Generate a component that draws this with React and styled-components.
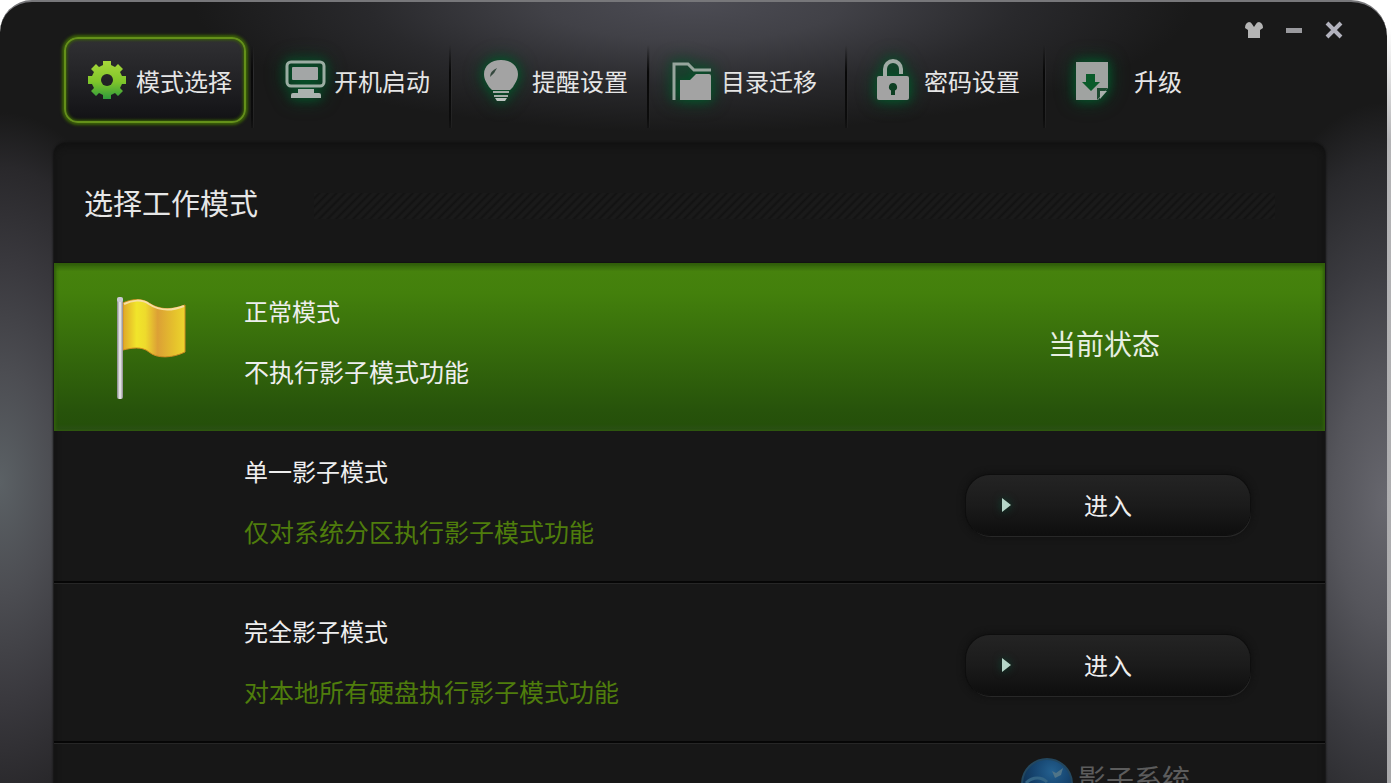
import React, { useState } from 'react';
import styled, { createGlobalStyle, css } from 'styled-components';

const GlobalStyle = createGlobalStyle`
  * {
    box-sizing: border-box;
  }

  body {
    margin: 0;
    overflow: hidden;
    background: #fff;
    font-family: 'Noto Sans CJK SC', 'Liberation Sans', sans-serif;
  }

  button {
    font-family: inherit;
    margin: 0;
    cursor: pointer;
  }
`;

const Desktop = styled.div`
  height: 100vh;
  overflow: hidden;
  padding-right: 4px;
  background: linear-gradient(to bottom, #fff 30px, #b4b4b6 140px, #a8a8aa);
`;

const Window = styled.div`
  display: flex;
  flex-direction: column;
  height: 100%;
  overflow: hidden;
  border-radius: 32px 36px 0 0;
  border-top: 2px solid #77777a;
  background:
    radial-gradient(ellipse 500px 130px at 50% 0, #4c4c54, #414147 30%, #29292c 65%, transparent),
    radial-gradient(ellipse 180px 370px at 0 480px, #5b6165, #4c4d52 30%, #39383d 60%, #29282b 85%, transparent),
    radial-gradient(ellipse 180px 400px at 100% 500px, #67676e, #55555b 30%, #3b3b40 60%, #29292c 85%, transparent),
    #191919;
`;

const Header = styled.header`
  display: flex;
  flex-shrink: 0;
  height: 141px;
  padding: 35px 33px 0 56px;
`;

const Tabs = styled.ul`
  display: flex;
  list-style: none;
  margin: 0;
  padding: 0;
`;

const TabItem = styled.li`
  flex: 0 0 198px;
  height: 91px;
  padding: 0 8px 5px;
  background:
    linear-gradient(transparent, #080808 30%, #0c0c0c 80%, transparent) right 1px top 8px / 2px 100% no-repeat,
    linear-gradient(transparent, #2c2c2e 30%, #232323 80%, transparent) right top 8px / 1px 100% no-repeat;

  &:last-child {
    flex: 0 0 auto;
    background: none;
  }
`;

const TabButton = styled.button`
  display: flex;
  align-items: center;
  gap: 9px;
  width: 100%;
  height: 100%;
  padding: 0 0 0 ${({ $indent }) => $indent}px;
  border: 2px solid transparent;
  border-radius: 14px;
  background: none;
  color: #e6e6e6;
  font-size: 24px;
  line-height: 32px;
  text-align: left;
  white-space: nowrap;

  ${({ $active }) =>
    $active &&
    css`
      border-color: #64901a;
      background: linear-gradient(#303033, #222225 50%, #121215) padding-box;
      box-shadow:
        0 0 3px 2px #3b6206,
        inset 0 0 3px 1px #3b6206;
    `}
`;

const TabLabel = styled.span`
  min-width: 72px;
  padding-top: 2px;
  text-align: center;
`;

const TabIcon = styled.svg`
  flex: none;
  width: 40px;
  height: 40px;
  overflow: visible;
  filter: ${({ $glow }) =>
    $glow ? 'drop-shadow(0 0 5px #06522a) drop-shadow(0 0 8px #064a26)' : 'none'};
`;

const Controls = styled.div`
  display: flex;
  height: 40px;
  margin: -27px 0 0 auto;
`;

const ControlButton = styled.button`
  display: flex;
  align-items: center;
  justify-content: center;
  width: 40px;
  height: 40px;
  padding: 0;
  border: 0;
  background: none;
`;

const Panel = styled.main`
  flex: 1 0 auto;
  margin: 0 62px 0 54px;
  border-radius: 12px 12px 0 0;
  background: #171717;
  box-shadow:
    0 0 2px 1px #121212,
    inset 0 3px 6px #111;
`;

const PanelHeader = styled.div`
  display: flex;
  align-items: center;
  gap: 56px;
  height: 120px;
  padding: 0 50px 2px 30px;
`;

const PanelTitle = styled.h1`
  margin: 0;
  color: #e6e6e6;
  font-size: 29px;
  font-weight: 400;
  line-height: 40px;
  white-space: nowrap;
`;

const Hatch = styled.div`
  flex: 1;
  height: 26px;
  margin-top: 8px;
  background: repeating-linear-gradient(135deg, #1a1a1a 0 2px, #121212 4px, #1a1a1a 6px);
`;

const ModeList = styled.ul`
  list-style: none;
  margin: 0;
  padding: 0;
`;

const ModeRow = styled.li`
  display: flex;
  align-items: center;
  height: 160px;
  padding: 0 75px 2px 0;
  border-bottom: 2px solid #060606;
  box-shadow: 0 1px 0 #262626;

  ${({ $current }) =>
    $current &&
    css`
      position: relative;
      height: 168px;
      margin-bottom: -8px;
      padding-bottom: 12px;
      border-bottom: 0;
      background: linear-gradient(#2f5b0b, #46820d 5%, #43800c 18%, #27530b 88%, #25500a 96%, #2c4f18);
      box-shadow:
        0 -1px 1px #121212,
        inset 2px 0 3px #315f0b,
        inset -2px 0 3px #315f0b;
    `}
`;

const ModeIcon = styled.div`
  display: flex;
  justify-content: center;
  flex: 0 0 190px;
  padding: 14px 0 0 8px;
`;

const ModeText = styled.div`
  flex: 1;
  white-space: nowrap;
`;

const ModeName = styled.h2`
  margin: 0;
  color: #eee;
  font-size: 24px;
  font-weight: 400;
  line-height: 60px;
`;

const ModeDescription = styled.p`
  margin: 0;
  color: ${({ $current }) => ($current ? '#eee' : '#4f7d0c')};
  font-size: 25px;
  line-height: 60px;
`;

const ModeAction = styled.div`
  flex: 0 0 284px;
  padding-top: 8px;
`;

const CurrentState = styled.p`
  margin: 0;
  padding: 0 8px 4px 0;
  color: #e8efe2;
  font-size: 28px;
  line-height: 60px;
  text-align: center;
`;

const EnterButton = styled.button`
  display: grid;
  grid-template-columns: 40px 1fr 40px;
  align-items: center;
  width: 100%;
  height: 60px;
  padding: 0 16px;
  border: 0;
  border-radius: 24px;
  background: linear-gradient(#242424, #1b1b1b 50%, #0e0e0e);
  box-shadow:
    0 0 0 1px #0e0e0e,
    1px 2px 0 0 #282828,
    0 0 6px 2px #101010;
  color: #eee;
  font-size: 24px;
  line-height: 32px;
`;

const Arrow = styled.svg`
  justify-self: center;
  margin-left: 8px;
  filter: drop-shadow(0 0 4px #0a4a34);
`;

const Brand = styled.footer`
  display: flex;
  align-items: flex-start;
  justify-content: flex-end;
  gap: 5px;
  padding: 15px 135px 0 0;
  color: #5c5c5c;
  font-size: 28px;
  line-height: 40px;
`;

const GearIcon = () => (
  <TabIcon viewBox="0 0 40 40" aria-hidden="true">
    <defs>
      <linearGradient id="gear" x1="0" y1="0" x2="0" y2="1">
        <stop offset="0" stopColor="#a8d83a" />
        <stop offset="0.55" stopColor="#7fc52a" />
        <stop offset="1" stopColor="#2f9a3c" />
      </linearGradient>
      <mask id="gearHole">
        <rect width="40" height="40" fill="#fff" />
        <circle cx="20" cy="20" r="6" fill="#000" />
      </mask>
    </defs>
    <path
      mask="url(#gearHole)"
      fill="url(#gear)"
      d="M16 1h8v4l4 2 3-3 5 5-3 3 2 4h4v8h-4l-2 4 3 3-5 5-3-3-4 2v4h-8v-4l-4-2-3 3-5-5 3-3-2-4H1v-8h4l2-4-3-3 5-5 3 3 4-2z"
    />
  </TabIcon>
);

const MonitorIcon = () => (
  <TabIcon $glow viewBox="0 0 40 40" aria-hidden="true">
    <rect x="2" y="2" width="37" height="24" rx="4" fill="none" stroke="#9bada3" strokeWidth="3" />
    <rect x="7" y="7" width="26" height="13" rx="1" fill="#a3a6a6" />
    <path d="M13 29h16v4h5q2 0 2 2v3H6v-3q0-2 2-2h5z" fill="#a9b2ae" />
  </TabIcon>
);

const BulbIcon = () => (
  <TabIcon $glow viewBox="0 0 40 40" aria-hidden="true">
    <path
      d="M18 0C8 0 1 6 1 14c0 6 3 9 5 13l3 3h18l3-3c2-4 5-7 5-13C35 6 28 0 18 0z"
      fill="#a3a3a3"
    />
    <path d="M7 17q0-6 7-9-2 5-7 9z" fill="#35483e" />
    <path d="M10 32h16M11 36h14" stroke="#a3aca7" strokeWidth="2" />
    <path d="M12 38h12l-2 3h-8z" fill="#bcc2bf" />
  </TabIcon>
);

const FolderIcon = () => (
  <TabIcon $glow viewBox="0 0 40 40" aria-hidden="true">
    <path d="M2 40V4h14l6 6h17" fill="none" stroke="#97a59d" strokeWidth="3" />
    <path d="M8 40V20h10l6-6h13q2 0 2 2v24z" fill="#a3a3a3" />
  </TabIcon>
);

const LockIcon = () => (
  <TabIcon $glow viewBox="0 0 40 40" aria-hidden="true">
    <path d="M10 16V9a8 8 0 0 1 16 0v5" fill="none" stroke="#a0aba5" strokeWidth="4" />
    <rect x="2" y="16" width="32" height="24" rx="2" fill="#a3a3a3" />
    <path d="M18 23a4 4 0 0 1 2 7.500V35h-4v-4.500A4 4 0 0 1 18 23z" fill="#0d3f22" />
  </TabIcon>
);

const UpgradeIcon = () => (
  <TabIcon $glow viewBox="0 0 40 40" aria-hidden="true">
    <path d="M3 2h32v26l-10 12H3z" fill="#a0a3a1" />
    <path d="M13 14h9v8h5l-9 9-9-9h4z" fill="#0a5a2a" />
    <path d="M24 40V28h11z" fill="#1d4a30" />
    <path d="M27 39v-8h7z" fill="#a9b0ac" />
  </TabIcon>
);

const ShirtIcon = () => (
  <svg width="18" height="18" viewBox="0 0 18 18" aria-hidden="true">
    <path
      d="M4 1q2 0 3 2l2 3 2-3q1-2 3-2 4 1 4 6l-3 2v8H3V9L0 7q0-5 4-6z"
      fill="#b4b4b4"
    />
  </svg>
);

const MinimizeIcon = () => (
  <svg width="18" height="18" viewBox="0 0 18 18" aria-hidden="true">
    <rect x="1" y="7" width="16" height="5" fill="#9a9a9e" />
  </svg>
);

const CloseIcon = () => (
  <svg width="18" height="18" viewBox="0 0 18 18" aria-hidden="true">
    <path d="M2 2l14 14M16 2L2 16" stroke="#b2b2bd" strokeWidth="4" />
  </svg>
);

const FlagIcon = () => (
  <svg width="74" height="104" viewBox="0 0 74 104" aria-hidden="true">
    <defs>
      <linearGradient id="cloth" x1="0" y1="0" x2="1" y2="0">
        <stop offset="0" stopColor="#dfa728" />
        <stop offset="0.22" stopColor="#f1e52b" />
        <stop offset="0.36" stopColor="#eedb2c" />
        <stop offset="0.56" stopColor="#dca035" />
        <stop offset="0.85" stopColor="#e6c42c" />
        <stop offset="1" stopColor="#ecd52e" />
      </linearGradient>
      <linearGradient id="pole" x1="0" y1="0" x2="1" y2="0">
        <stop offset="0" stopColor="#85858a" />
        <stop offset="0.5" stopColor="#f4f4f4" />
        <stop offset="1" stopColor="#8d8a8f" />
      </linearGradient>
    </defs>
    <path
      d="M7 7c8-4 19-5 26 0 9 6 20 8 36 2v47c-12 6-28 7-36 0-7-6-18-4-26-2z"
      fill="url(#cloth)"
      stroke="#cf8b22"
      strokeWidth="1"
    />
    <path d="M8 8c8-4 18-5 25 0 9 6 20 8 35 2" fill="none" stroke="#f6dfa0" strokeWidth="2" />
    <rect x="1" y="2" width="6" height="101" rx="2" fill="url(#pole)" />
    <rect x="1" y="1" width="6" height="5" rx="2" fill="#c9c9d2" />
  </svg>
);

const GlobeIcon = () => (
  <svg width="52" height="52" viewBox="0 0 52 52" aria-hidden="true">
    <defs>
      <radialGradient id="globe" cx="0.6" cy="0.25" r="0.7">
        <stop offset="0" stopColor="#24608f" />
        <stop offset="0.5" stopColor="#164570" />
        <stop offset="1" stopColor="#0d2c4c" />
      </radialGradient>
    </defs>
    <circle cx="26" cy="26" r="25" fill="url(#globe)" stroke="#23475f" strokeWidth="2" />
    <path d="M31 13l4 2 7-5-2 7-6 3z" fill="#4f7488" />
    <path d="M5 25c7-7 16-6 21-1" fill="none" stroke="#336484" strokeWidth="3" />
  </svg>
);

const tabs = [
  { id: 'mode', label: '模式选择', icon: GearIcon, indent: 21 },
  { id: 'boot', label: '开机启动', icon: MonitorIcon, indent: 21 },
  { id: 'remind', label: '提醒设置', icon: BulbIcon, indent: 21 },
  { id: 'folder', label: '目录迁移', icon: FolderIcon, indent: 12 },
  { id: 'password', label: '密码设置', icon: LockIcon, indent: 17 },
  { id: 'upgrade', label: '升级', icon: UpgradeIcon, indent: 17 },
];

const modes = [
  { id: 'normal', name: '正常模式', description: '不执行影子模式功能' },
  { id: 'single', name: '单一影子模式', description: '仅对系统分区执行影子模式功能' },
  { id: 'full', name: '完全影子模式', description: '对本地所有硬盘执行影子模式功能' },
];

const App = () => {
  const [tab, setTab] = useState('mode');
  const [current, setCurrent] = useState('normal');

  return (
    <Desktop>
      <GlobalStyle />
      <Window>
        <Header>
          <nav>
            <Tabs>
              {tabs.map(({ id, label, icon: Icon, indent }) => (
                <TabItem key={id}>
                  <TabButton
                    type="button"
                    $active={id === tab}
                    $indent={indent}
                    onClick={() => setTab(id)}
                  >
                    <Icon />
                    <TabLabel>{label}</TabLabel>
                  </TabButton>
                </TabItem>
              ))}
            </Tabs>
          </nav>
          <Controls>
            <ControlButton type="button" aria-label="换肤">
              <ShirtIcon />
            </ControlButton>
            <ControlButton type="button" aria-label="最小化">
              <MinimizeIcon />
            </ControlButton>
            <ControlButton type="button" aria-label="关闭">
              <CloseIcon />
            </ControlButton>
          </Controls>
        </Header>
        <Panel>
          <PanelHeader>
            <PanelTitle>选择工作模式</PanelTitle>
            <Hatch />
          </PanelHeader>
          <ModeList>
            {modes.map(({ id, name, description }) => {
              const isCurrent = id === current;
              return (
                <ModeRow key={id} $current={isCurrent}>
                  <ModeIcon>{isCurrent && <FlagIcon />}</ModeIcon>
                  <ModeText>
                    <ModeName>{name}</ModeName>
                    <ModeDescription $current={isCurrent}>{description}</ModeDescription>
                  </ModeText>
                  <ModeAction>
                    {isCurrent ? (
                      <CurrentState>当前状态</CurrentState>
                    ) : (
                      <EnterButton type="button" onClick={() => setCurrent(id)}>
                        <Arrow width="9" height="14" viewBox="0 0 9 14" aria-hidden="true">
                          <path d="M0 0l9 7-9 7z" fill="#b5d6c8" />
                        </Arrow>
                        <span>进入</span>
                      </EnterButton>
                    )}
                  </ModeAction>
                </ModeRow>
              );
            })}
          </ModeList>
          <Brand>
            <GlobeIcon />
            <span>影子系统</span>
          </Brand>
        </Panel>
      </Window>
    </Desktop>
  );
};

export default App;
